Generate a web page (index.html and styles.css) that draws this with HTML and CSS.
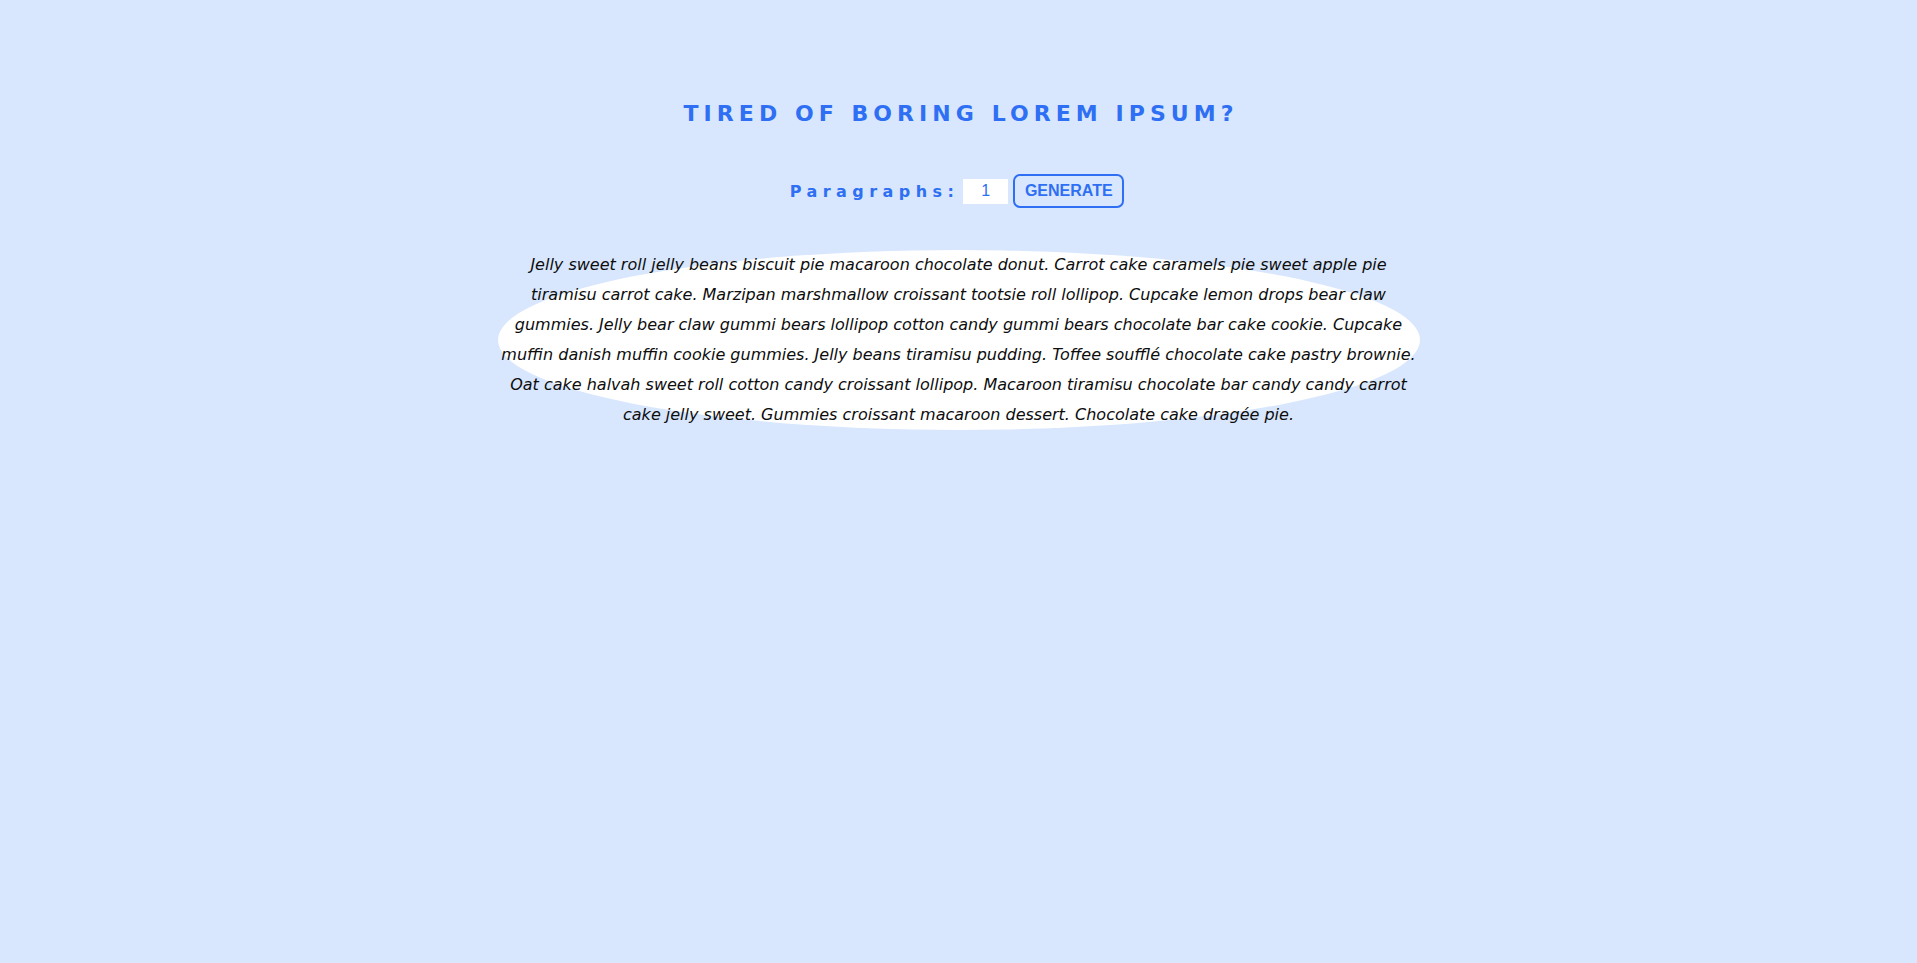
FILE: index.html
```html
<!DOCTYPE html>
<html lang="en">
<head>
<meta charset="utf-8">
<title>Lorem Ipsum Generator</title>
<link rel="stylesheet" href="styles.css">
</head>
<body>
<main class="page">
  <h1 class="title">Tired of boring lorem ipsum?</h1>
  <form class="controls">
    <label class="label" for="amount">Paragraphs:</label>
    <input class="amount" id="amount" type="text" value="1">
    <button class="btn" type="button">GENERATE</button>
  </form>
  <article class="result">
    <p class="text">Jelly sweet roll jelly beans biscuit pie macaroon chocolate donut. Carrot cake caramels pie sweet apple pie tiramisu carrot cake. Marzipan marshmallow croissant tootsie roll lollipop. Cupcake lemon drops bear claw gummies. Jelly bear claw gummi bears lollipop cotton candy gummi bears chocolate bar cake cookie. Cupcake muffin danish muffin cookie gummies. Jelly beans tiramisu pudding. Toffee soufflé chocolate cake pastry brownie. Oat cake halvah sweet roll cotton candy croissant lollipop. Macaroon tiramisu chocolate bar candy candy carrot cake jelly sweet. Gummies croissant macaroon dessert. Chocolate cake dragée pie.</p>
  </article>
</main>
</body>
</html>
```

FILE: styles.css
```css
* { box-sizing: border-box; }
html, body {
  margin: 0;
  padding: 0;
  height: 100%;
}
body {
  background: #d8e7fe;
  font-family: "DejaVu Sans", "Open Sans", sans-serif;
}
.page {
  display: flex;
  flex-direction: column;
  align-items: center;
  padding-top: 99px;
}
.title {
  margin: 0;
  font-size: 22px;
  line-height: 30px;
  font-weight: 700;
  letter-spacing: 0.23em;
  text-transform: uppercase;
  color: #2f6ff3;
  padding-left: 0.23em;
}
.controls {
  display: flex;
  align-items: center;
  margin-top: 45px;
  gap: 4px;
  margin-right: 3px;
}
.label {
  font-size: 16px;
  font-weight: 700;
  letter-spacing: 0.34em;
  color: #2f6ff3;
}
.amount {
  width: 45px;
  height: 25px;
  border: none;
  background: #fff;
  color: #2f6ff3;
  font-family: "Liberation Sans", Arial, sans-serif;
  font-size: 16px;
  text-align: center;
  padding: 0;
  outline: none;
}
.btn {
  margin-left: 1px;
  width: 111px;
  height: 34px;
  background: transparent;
  border: 2px solid #2f6ff3;
  border-radius: 7px;
  color: #2f6ff3;
  font-family: "Liberation Sans", Arial, sans-serif;
  font-weight: 700;
  font-size: 16px;
  padding: 0;
}
.result {
  margin-top: 42px;
}
.text {
  margin: 0;
  width: 922px;
  background: #fff;
  border-radius: 50%;
  font-style: italic;
  font-size: 16px;
  line-height: 30px;
  text-align: center;
  color: #0d0d0d;
}
```
